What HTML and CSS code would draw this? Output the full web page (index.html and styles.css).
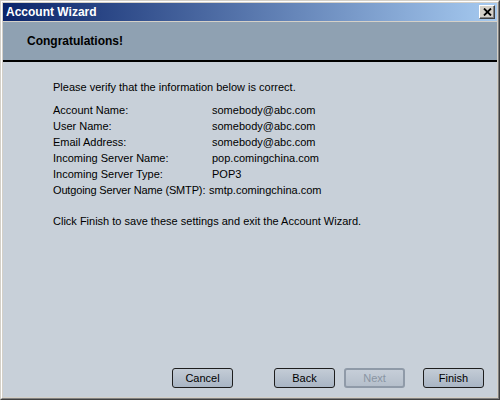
FILE: index.html
```html
<!DOCTYPE html>
<html lang="en">
<head>
    <meta charset="UTF-8">
    <title>Account Wizard</title>
    <link rel="stylesheet" href="styles.css">
</head>
<body>

    <!-- Wizard window -->
    <div class="window">
        <div class="frame">
            <div class="titlebar">
                <span class="title">Account Wizard</span>
                <button class="close-btn" title="Close">
                    <svg width="9" height="8" viewBox="0 0 9 8">
                        <path d="M1 0.5 L8 7.5 M8 0.5 L1 7.5" stroke="#000" stroke-width="1.8" fill="none"/>
                    </svg>
                </button>
            </div>

            <div class="header">Congratulations!</div>

            <div class="content">
                <p class="intro">Please verify that the information below is correct.</p>

                <div class="summary">
                    <span>Account Name:</span><span>somebody@abc.com</span>
                    <span>User Name:</span><span>somebody@abc.com</span>
                    <span>Email Address:</span><span>somebody@abc.com</span>
                    <span>Incoming Server Name:</span><span>pop.comingchina.com</span>
                    <span>Incoming Server Type:</span><span>POP3</span>
                    <span class="tight">Outgoing Server Name (SMTP):</span><span class="shift">smtp.comingchina.com</span>
                </div>

                <p class="outro">Click Finish to save these settings and exit the Account Wizard.</p>
            </div>

            <div class="footer">
                <button class="btn">Cancel</button>
                <div class="nav">
                    <button class="btn">Back</button>
                    <button class="btn" disabled>Next</button>
                    <button class="btn finish">Finish</button>
                </div>
            </div>
        </div>
    </div>

</body>
</html>
```

FILE: styles.css
```css
/* Wizard dialog */
body {
    margin: 0;
    font-family: "Liberation Sans", Arial, sans-serif;
    font-size: 11px;
    color: #000;
}

.window {
    width: 500px;
    height: 400px;
    box-sizing: border-box;
    border: 1px solid;
    border-color: #d4d0c8 #404040 #404040 #d4d0c8;
    display: flex;
}

.frame {
    flex: 1;
    display: flex;
    flex-direction: column;
    border: 1px solid;
    border-color: #ffffff #808080 #808080 #ffffff;
    padding: 1px;
    background-color: #d4d0c8;
}

.titlebar {
    height: 18px;
    display: flex;
    align-items: center;
    justify-content: space-between;
    padding: 0 2px 0 3px;
    background: linear-gradient(to right, #0a246a, #a6caf0);
    margin-bottom: 1px;
}

.title {
    color: white;
    font-weight: bold;
    font-size: 12px;
}

.close-btn {
    width: 16px;
    height: 14px;
    padding: 0;
    display: flex;
    align-items: center;
    justify-content: center;
    background-color: #d4d0c8;
    border: 1px solid;
    border-color: #ffffff #404040 #404040 #ffffff;
    box-shadow: inset -1px -1px 0 #808080;
}

.header {
    height: 38px;
    display: flex;
    align-items: center;
    padding-left: 24px;
    background-color: #8fa1b2;
    border-bottom: 2px solid #000;
    font-weight: bold;
    font-size: 12px;
}

.content {
    flex: 1;
    background-color: #c8d0d9;
    padding: 19px 0 0 50px;
}

.intro {
    margin: 0 0 11px 0;
}

.summary {
    display: grid;
    grid-template-columns: 159px auto;
    row-gap: 3px;
    line-height: 13px;
}

.summary .tight {
    letter-spacing: -0.15px;
    white-space: nowrap;
}

.summary .shift {
    margin-left: -3px;
}

.outro {
    margin: 18px 0 0 0;
}

.footer {
    background-color: #c8d0d9;
    display: flex;
    justify-content: space-between;
    padding: 0 13px 9px 169px;
}

.nav {
    display: flex;
    gap: 9px;
}

.finish {
    margin-left: 9px;
}

.btn {
    width: 61px;
    height: 20px;
    padding: 0;
    font-family: inherit;
    font-size: 11px;
    color: #000;
    border: 1px solid #1e1e1e;
    border-radius: 3px;
    background: linear-gradient(to bottom, #c4ccd6, #a9b5c4);
}

.btn:disabled {
    color: #8a95a3;
    border: 2px solid #8f9aa8;
    background: linear-gradient(to bottom, #c6ced8, #b5bfcb);
}
```
